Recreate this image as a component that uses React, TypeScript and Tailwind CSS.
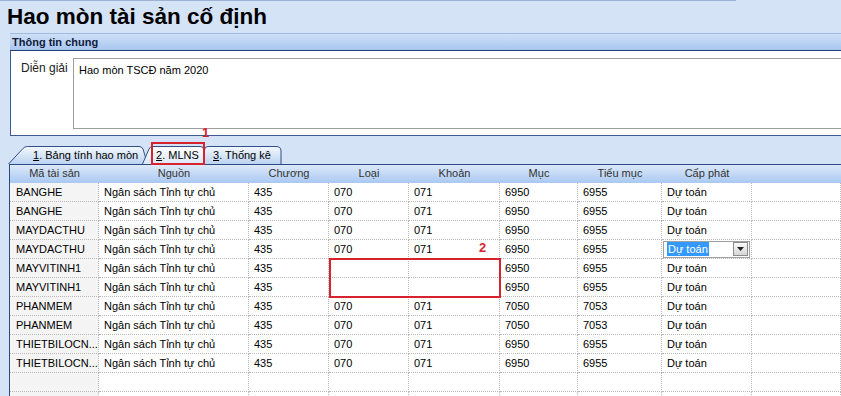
import React from 'react';

const font = { fontFamily: '"Liberation Sans", Arial, sans-serif' };

type Row = [string, string, string, string, string, string, string, string];

const rows: Row[] = [
  ['BANGHE', 'Ngân sách Tỉnh tự chủ', '435', '070', '071', '6950', '6955', 'Dự toán'],
  ['BANGHE', 'Ngân sách Tỉnh tự chủ', '435', '070', '071', '6950', '6955', 'Dự toán'],
  ['MAYDACTHU', 'Ngân sách Tỉnh tự chủ', '435', '070', '071', '6950', '6955', 'Dự toán'],
  ['MAYDACTHU', 'Ngân sách Tỉnh tự chủ', '435', '070', '071', '6950', '6955', 'Dự toán'],
  ['MAYVITINH1', 'Ngân sách Tỉnh tự chủ', '435', '', '', '6950', '6955', 'Dự toán'],
  ['MAYVITINH1', 'Ngân sách Tỉnh tự chủ', '435', '', '', '6950', '6955', 'Dự toán'],
  ['PHANMEM', 'Ngân sách Tỉnh tự chủ', '435', '070', '071', '7050', '7053', 'Dự toán'],
  ['PHANMEM', 'Ngân sách Tỉnh tự chủ', '435', '070', '071', '7050', '7053', 'Dự toán'],
  ['THIETBILOCN...', 'Ngân sách Tỉnh tự chủ', '435', '070', '071', '6950', '6955', 'Dự toán'],
  ['THIETBILOCN...', 'Ngân sách Tỉnh tự chủ', '435', '070', '071', '6950', '6955', 'Dự toán'],
];

const headers = ['Mã tài sản', 'Nguồn', 'Chương', 'Loại', 'Khoản', 'Mục', 'Tiểu mục', 'Cấp phát', ''];

const cols = 'grid grid-cols-[89px_150px_80px_80px_91px_78px_84px_90px_1fr]';

const cell = 'h-[19px] border-r border-b border-dotted border-[#b9b9b9] pl-[5px] leading-[18px] whitespace-nowrap overflow-hidden';

const TabShape: React.FC<{ d: string; w: number; light?: boolean }> = ({ d, w, light }) => (
  <svg className="absolute left-0 top-0" width={w} height={18} viewBox={`0 0 ${w} 18`}>
    <defs>
      <linearGradient id={light ? 'tl' : 'tg'} x1="0" y1="0" x2="0" y2="1">
        <stop offset="0" stopColor={light ? '#ffffff' : '#f4f8fd'} />
        <stop offset="1" stopColor={light ? '#dbe8f8' : '#bcd3f2'} />
      </linearGradient>
    </defs>
    <path d={d} fill={`url(#${light ? 'tl' : 'tg'})`} stroke="#2f4f86" strokeWidth="1" />
  </svg>
);

const DropCell: React.FC = () => (
  <div className="h-[19px] border-r border-b border-dotted border-[#b9b9b9] flex items-center pl-[1px] pr-[1px] bg-white">
    <div className="flex-1 h-[17px] border border-[#a0a0a0] flex items-center justify-between pl-[3px] pr-[1px]">
      <span className="bg-[#3399ff] text-white leading-[14px] px-[1px]">Dự toán</span>
      <span className="w-[15px] h-[14px] border border-[#8c8c8c] bg-gradient-to-b from-[#fafafa] to-[#d6d6d6] flex items-center justify-center">
        <svg width="7" height="4" viewBox="0 0 7 4"><path d="M0 0h7L3.5 4z" fill="#222" /></svg>
      </span>
    </div>
  </div>
);

export default function App() {
  return (
    <div className="w-[841px] h-[396px] overflow-hidden bg-[#d5e3f6] text-[11px] text-black relative" style={font}>
      <div className="h-[1px] w-[736px] bg-[#9db3d4]" />
      {/* title */}
      <div className="h-[32px] pl-[7px] pt-[3px] text-[22.5px] font-bold leading-[26px]">Hao mòn tài sản cố định</div>

      {/* Thông tin chung */}
      <div className="ml-[10px] h-[18px] border-t border-[#9fbbe3] border-b border-b-[#1f3b73] bg-gradient-to-b from-[#cfe0f7] to-[#a8c6f0] pl-[2px] text-[11px] font-bold leading-[16px] text-[#10203c]">
        Thông tin chung
      </div>
      <div className="ml-[10px] h-[85px] bg-white border-l border-b border-[#3c5c93] flex pt-[7px]">
        <div className="w-[62px] pl-[10px] pt-[1px] text-[12px] text-[#222]">Diễn giải</div>
        <div className="flex-1 h-[71px] border border-[#9e9e9e] border-r-0 pl-[5px] pt-[3px]">Hao mòn TSCĐ năm 2020</div>
      </div>

      {/* tabs */}
      <div className="h-[28px] flex items-end pl-[8px] relative">
        <div className="relative w-[140px] h-[18px] leading-[18px]">
          <TabShape w={140} d="M0.5 18 L15 2.5 Q16.5 0.5 19.5 0.5 L131 0.5 Q134 0.5 135 3 L139.5 18" />
          <span className="relative pl-[25px]"><u>1</u>. Bảng tính hao mòn</span>
        </div>
        <div className="relative w-[62px] h-[18px] -ml-[6px] leading-[18px] z-10">
          <TabShape light w={62} d="M0.5 18 L7 3 Q8 0.5 11 0.5 L58 0.5 Q61.5 0.5 61.5 3 L61.5 18" />
          <span className="relative pl-[14px]"><u>2</u>. MLNS</span>
        </div>
        <div className="relative w-[78px] h-[18px] leading-[18px]">
          <TabShape w={78} d="M0.5 18 L0.5 4 Q0.5 0.5 4 0.5 L72 0.5 Q77 0.5 77 5 L77 18" />
          <span className="relative pl-[9px]"><u>3</u>. Thống kê</span>
        </div>
        <div className="absolute left-[151px] top-[6px] w-[54px] h-[23px] border-2 border-[#d8232f] z-20" />
        <div className="absolute left-[202px] top-[-13px] text-[13px] font-bold text-[#d8232f]">1</div>
      </div>

      {/* grid */}
      <div className="ml-[9px] border-l border-t border-[#2a4a85] bg-white relative">
        <div className={`${cols} h-[18px] bg-gradient-to-b from-[#dde9f9] to-[#a9c8f1] text-[#333]`}>
          {headers.map((h, i) => (
            <div key={i} className="text-center leading-[17px] whitespace-nowrap">{h}</div>
          ))}
        </div>
        {rows.map((r, ri) => (
          <div key={ri} className={cols}>
            {r.map((c, ci) =>
              ri === 3 && ci === 7 ? (
                <DropCell key={ci} />
              ) : (
                <div key={ci} className={`${cell} ${ci === 0 ? 'pl-[6px] bg-[#f4f4f4]' : ''}`}>{c}</div>
              )
            )}
            <div className={cell} />
          </div>
        ))}
        {[0, 1].map(k => (
          <div key={k} className={cols}>
            {headers.map((_, ci) => (
              <div key={ci} className={`${cell} ${ci === 0 ? 'bg-[#f4f4f4]' : ''}`} />
            ))}
          </div>
        ))}
        <div className="absolute left-[319px] top-[93px] w-[172px] h-[40px] border-2 border-[#d8232f]" />
        <div className="absolute left-[469px] top-[73px] text-[13px] font-bold text-[#d8232f]">2</div>
      </div>
    </div>
  );
}
